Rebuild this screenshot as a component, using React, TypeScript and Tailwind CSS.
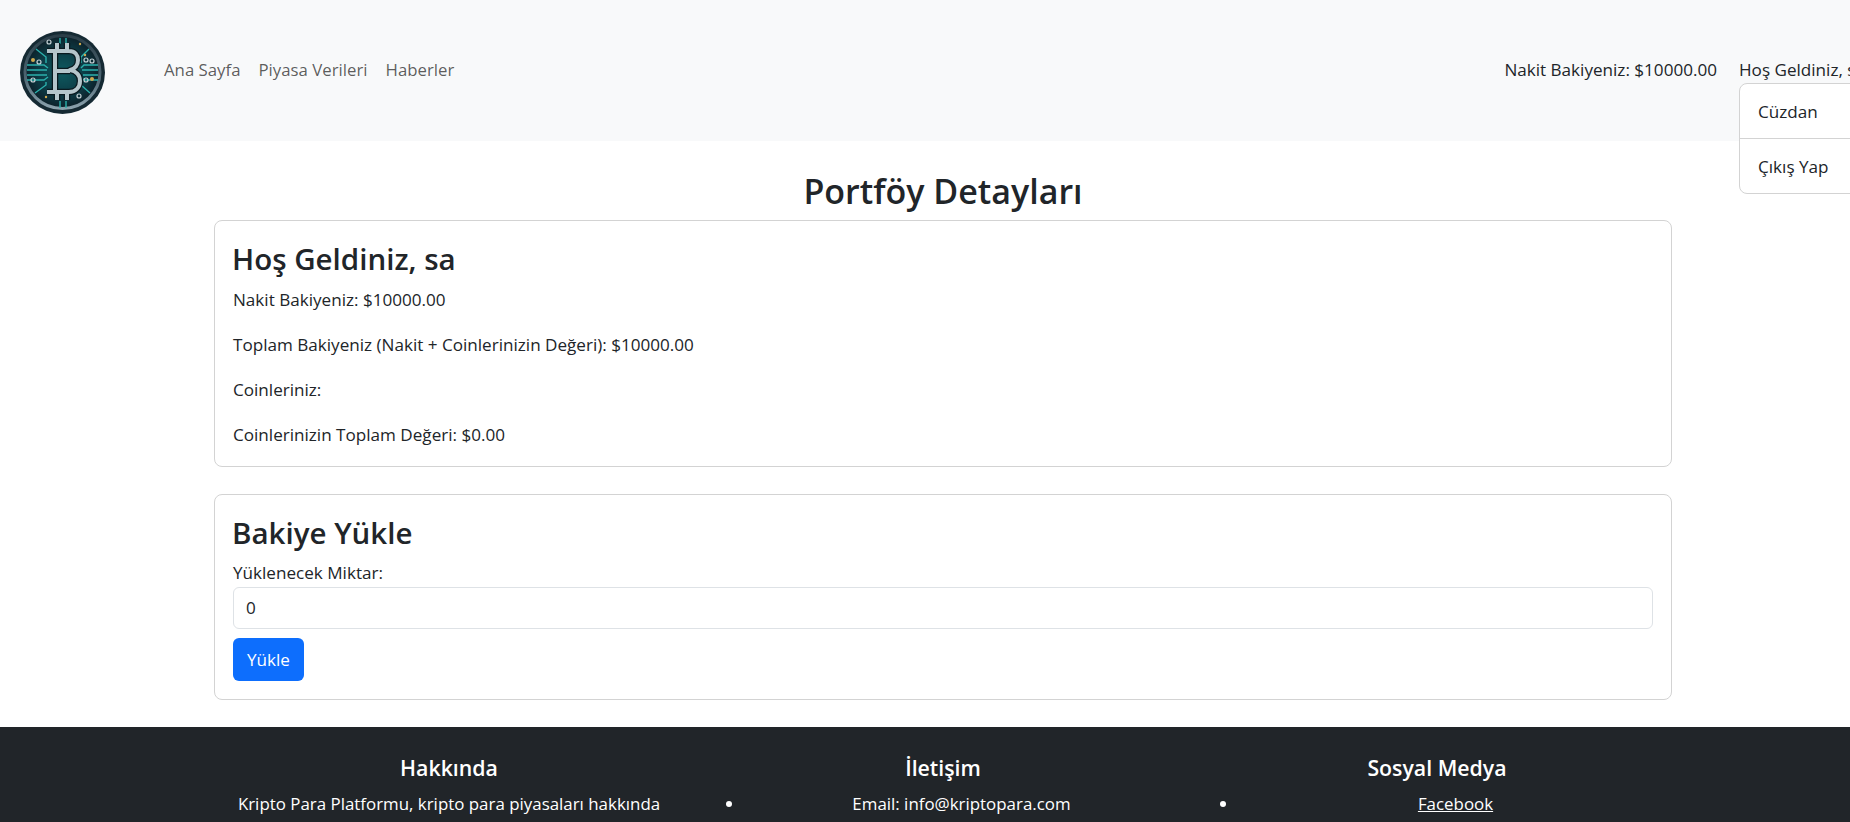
import React from 'react';

const font = "font-['Open_Sans','Liberation_Sans',sans-serif]";

const Logo = () => (
  <svg width="85" height="83" viewBox="0 0 85 83" className="blur-[0.3px] shrink-0 mt-[3px]">
    <defs>
      <radialGradient id="face" cx="50%" cy="50%" r="50%">
        <stop offset="0%" stopColor="#0e5a60" />
        <stop offset="65%" stopColor="#0c3a44" />
        <stop offset="100%" stopColor="#0d2029" />
      </radialGradient>
      <linearGradient id="rim" x1="0" y1="0" x2="0" y2="1">
        <stop offset="0%" stopColor="#2b3e48" />
        <stop offset="55%" stopColor="#4c6470" />
        <stop offset="100%" stopColor="#8ba2ad" />
      </linearGradient>
    </defs>
    <ellipse cx="42.500" cy="41.500" rx="42.500" ry="41.500" fill="#152a33" />
    <ellipse cx="42.500" cy="41" rx="37.500" ry="36.500" fill="url(#face)" stroke="url(#rim)" strokeWidth="3" />
    {/* circuit traces */}
    <g stroke="#2bb0ac" strokeWidth="1.4" fill="none">
      <path d="M7 34h17l4 3M7 39h20M7 44h20M7 49h17l4-3" />
      <path d="M78 34H64l-3 3M78 39H62M78 44H63M78 49H64l-3-3" />
      <path d="M16 18l10 8v6M69 18l-8 8v6M15 62l11-8v-3M70 62l-9-8v-3" />
      <path d="M40 7v6M46 7v6M40 70v7M46 70v7" />
    </g>
    <g fill="#d0a94e">
      <circle cx="13" cy="29" r="2" />
      <circle cx="72" cy="48" r="2" />
      <circle cx="60" cy="13" r="1.200" />
      <circle cx="26" cy="66" r="1.200" />
      <circle cx="65" cy="24" r="1.200" />
    </g>
    <g fill="none" stroke="#c5d2d6" strokeWidth="1.200">
      <circle cx="29" cy="11" r="2" />
      <circle cx="19" cy="31" r="2" />
      <circle cx="13" cy="49" r="2" />
      <circle cx="66" cy="29" r="2" />
      <circle cx="72" cy="30" r="2" />
      <circle cx="66" cy="49" r="2" />
      <circle cx="59" cy="65" r="2" />
    </g>
    {/* bitcoin sign, dark edge under the metal */}
    <g fill="none" stroke="#0a1a20" strokeWidth="6.500" strokeLinejoin="round">
      <path d="M27 20h22c6 0 9 4 9 9s-3 9-8 10c6 1 10 5 10 11s-4 11-11 11H27M35 20v41M35 40h15M37 12v8M47 12v8M37 61v8M47 61v8" />
    </g>
    <g fill="none" stroke="#b4c5cb" strokeWidth="4" strokeLinejoin="round">
      <path d="M27 20h22c6 0 9 4 9 9s-3 9-8 10c6 1 10 5 10 11s-4 11-11 11H27M35 20v41M35 40h15M37 12v8M47 12v8M37 61v8M47 61v8" />
    </g>
  </svg>
);

const CardBox = ({ title, className, children }: { title: string; className: string; children: React.ReactNode }) => (
  <div className={`border border-[#d3d3d3] rounded-lg px-[18px] pt-4 pb-[17px] ${className}`}>
    <h3 className="text-[29.5px] font-semibold leading-[44px] mb-[4px] -ml-px">{title}</h3>
    {children}
  </div>
);

const FooterCol = ({ title, children }: { title: string; children: React.ReactNode }) => (
  <div className="px-3 text-center text-[16.9px]">
    <h5 className="text-[21.3px] font-semibold leading-6 mb-[9px]">{title}</h5>
    {children}
  </div>
);

export default function App() {
  return (
    <div className="h-screen overflow-hidden">
      <div className={`w-[1886px] text-[#212529] text-[17.1px] leading-[29px] ${font}`}>
        {/* Navbar */}
        <nav className="h-[141px] bg-[#f8f9fa] flex items-center pl-5">
          <Logo />
          <div className="flex gap-[2px] ml-[51px] text-black/65 text-[16.8px] -mt-0.5">
            <a className="px-2">Ana Sayfa</a>
            <a className="px-2">Piyasa Verileri</a>
            <a className="px-2">Haberler</a>
          </div>
          <span className="ml-auto -mt-0.5">Nakit Bakiyeniz: $10000.00</span>
          <div className="relative w-[147px] ml-[22px] -mt-0.5">
            <span className="whitespace-nowrap">Hoş Geldiniz, sa</span>
            <div className="absolute left-0 top-[28px] w-full bg-white border border-[#d3d3d3] rounded-lg">
              <div className="px-[18px] h-[55px] flex items-center border-b border-[#d3d3d3]">Cüzdan</div>
              <div className="px-[18px] h-[54px] flex items-center">Çıkış Yap</div>
            </div>
          </div>
        </nav>

        {/* Content */}
        <main className="w-[1482px] mx-auto px-3">
          <h2 className="text-[34px] font-semibold text-center leading-[40px] mt-[30px] mb-[9px]">Portföy Detayları</h2>
          <CardBox title="Hoş Geldiniz, sa" className="mb-[27px]">
            <div className="flex flex-col gap-4">
              <p>Nakit Bakiyeniz: $10000.00</p>
              <p>Toplam Bakiyeniz (Nakit + Coinlerinizin Değeri): $10000.00</p>
              <p>Coinleriniz:</p>
              <p>Coinlerinizin Toplam Değeri: $0.00</p>
            </div>
          </CardBox>
          <CardBox title="Bakiye Yükle" className="mb-[27px]">
            <label className="block leading-[28px]">Yüklenecek Miktar:</label>
            <input
              type="number"
              defaultValue={0}
              className={`block w-full h-[42px] px-3 pb-0.5 mb-[9px] border border-[#dee2e6] rounded-md text-[#212529] ${font}`}
            />
            <button className="block h-[43px] w-[71px] mb-px bg-[#0d6efd] text-white rounded-md">Yükle</button>
          </CardBox>
        </main>

        {/* Footer */}
        <footer className="bg-[#212529] text-white pt-[29px] h-[200px]">
          <div className="w-[1482px] mx-auto grid grid-cols-3">
            <FooterCol title="Hakkında">
              <p>Kripto Para Platformu, kripto para piyasaları hakkında</p>
            </FooterCol>
            <FooterCol title="İletişim">
              <ul className="list-disc pl-[37px]">
                <li>Email: info@kriptopara.com</li>
              </ul>
            </FooterCol>
            <FooterCol title="Sosyal Medya">
              <ul className="list-disc pl-[37px]">
                <li><a className="underline">Facebook</a></li>
              </ul>
            </FooterCol>
          </div>
        </footer>
      </div>
    </div>
  );
}
